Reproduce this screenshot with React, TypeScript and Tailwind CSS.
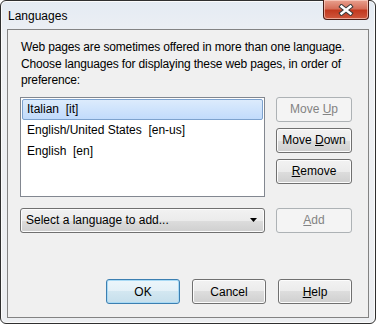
import React from "react";

const btnBase =
  "flex items-center justify-center rounded-[3px] border text-[12px] leading-none";
const btnNormal =
  "border-[#707070] bg-[linear-gradient(#f2f2f2,#ebebeb_50%,#dddddd_50%,#cfcfcf)] shadow-[inset_0_0_0_1px_#fcfcfc] text-black";
const btnDisabled =
  "border-[#adb2b5] bg-[#f4f4f4] text-[#838383]";
const btnDefault =
  "border-[#3c7fb1] bg-[linear-gradient(#ecf6fb,#e3f0f7_50%,#d3e7f1_50%,#c6dfec)] shadow-[inset_0_0_0_1px_#a9daf5] text-black";

function Btn({
  children,
  kind = "normal",
  className = "",
}: {
  children: React.ReactNode;
  kind?: "normal" | "disabled" | "default";
  className?: string;
}) {
  const k = kind === "normal" ? btnNormal : kind === "disabled" ? btnDisabled : btnDefault;
  return <div className={`${btnBase} ${k} ${className}`}>{children}</div>;
}

function CloseButton() {
  return (
    <div className="mt-[-1px] w-[46px] h-[20px] rounded-b-[4px] border border-t-0 border-[#4a1d16] bg-[linear-gradient(#e9a18f,#d66f5a_45%,#c2391f_55%,#d0583d)] shadow-[inset_0_0_0_1px_rgba(255,220,210,0.6)] flex items-center justify-center">
      <svg width="16" height="12" viewBox="0 0 16 12">
        <path
          d="M3.5 2.5 L12.5 9.5 M12.5 2.5 L3.5 9.5"
          stroke="#3a3a3a"
          strokeWidth="4.4"
          strokeLinecap="square"
        />
        <path
          d="M3.5 2.5 L12.5 9.5 M12.5 2.5 L3.5 9.5"
          stroke="#ffffff"
          strokeWidth="2.4"
          strokeLinecap="square"
        />
      </svg>
    </div>
  );
}

export default function App() {
  return (
    <div className="w-[384px] h-[331px] bg-white font-['Liberation_Sans',sans-serif]">
      <div className="w-[376px] h-[324px] rounded-[6px] border border-[#2f2f2f] bg-[linear-gradient(#e4ebf3,#eef0f3_12%,#eceef1)] shadow-[inset_0_0_0_1px_#fbfbfb] flex flex-col px-[6px] pb-[5px]">
        <div className="h-[28px] flex items-start justify-between">
          <span className="pl-[1px] pt-[9px] text-[12px] leading-[12px] text-black">
            Languages
          </span>
          <CloseButton />
        </div>
        <div className="flex-1 border border-[#838383] bg-[#f0f0f0] flex flex-col pl-[12px] pr-[16px] pt-[9px] pb-[13px] text-[12px] text-black">
          <div className="leading-[16.5px] pl-[1px] whitespace-nowrap tracking-[-0.15px]">
            <div>Web pages are sometimes offered in more than one language.</div>
            <div>Choose languages for displaying these web pages, in order of</div>
            <div>preference:</div>
          </div>
          <div className="flex gap-[11px] mt-[8px]">
            <div className="w-[245px] h-[100px] border border-[#828790] bg-white p-[1px] flex flex-col">
              <div className="h-[21px] rounded-[2px] border border-[#7da2ce] bg-[linear-gradient(#dcebfc,#c1dbfc)] flex items-center pl-[4px] whitespace-pre">
                Italian  [it]
              </div>
              <div className="h-[21px] flex items-center pl-[5px] whitespace-pre">
                English/United States  [en-us]
              </div>
              <div className="h-[21px] flex items-center pl-[5px] whitespace-pre">
                English  [en]
              </div>
            </div>
            <div className="flex flex-col gap-[6px]">
              <Btn kind="disabled" className="w-[76px] h-[25px]">
                <span>
                  Move <u>U</u>p
                </span>
              </Btn>
              <Btn className="w-[76px] h-[25px]">
                <span>
                  Move <u>D</u>own
                </span>
              </Btn>
              <Btn className="w-[76px] h-[25px]">
                <span>
                  <u>R</u>emove
                </span>
              </Btn>
            </div>
          </div>
          <div className="flex gap-[11px] mt-[11px]">
            <div className="w-[245px] h-[25px] rounded-[3px] border border-[#707070] bg-[linear-gradient(#f2f2f2,#ebebeb_50%,#dddddd_50%,#cfcfcf)] shadow-[inset_0_0_0_1px_#fcfcfc] flex items-center justify-between pl-[5px] pr-[7px]">
              <span>Select a language to add...</span>
              <svg width="7" height="4" viewBox="0 0 7 4">
                <path d="M0 0 H7 L3.5 4 Z" fill="#000" />
              </svg>
            </div>
            <Btn kind="disabled" className="w-[76px] h-[25px]">
              <span>
                <u>A</u>dd
              </span>
            </Btn>
          </div>
          <div className="mt-auto flex justify-end gap-[12px]">
            <Btn kind="default" className="w-[74px] h-[25px]">
              OK
            </Btn>
            <Btn className="w-[74px] h-[25px]">Cancel</Btn>
            <Btn className="w-[74px] h-[25px]">
              <span>
                <u>H</u>elp
              </span>
            </Btn>
          </div>
        </div>
      </div>
    </div>
  );
}
